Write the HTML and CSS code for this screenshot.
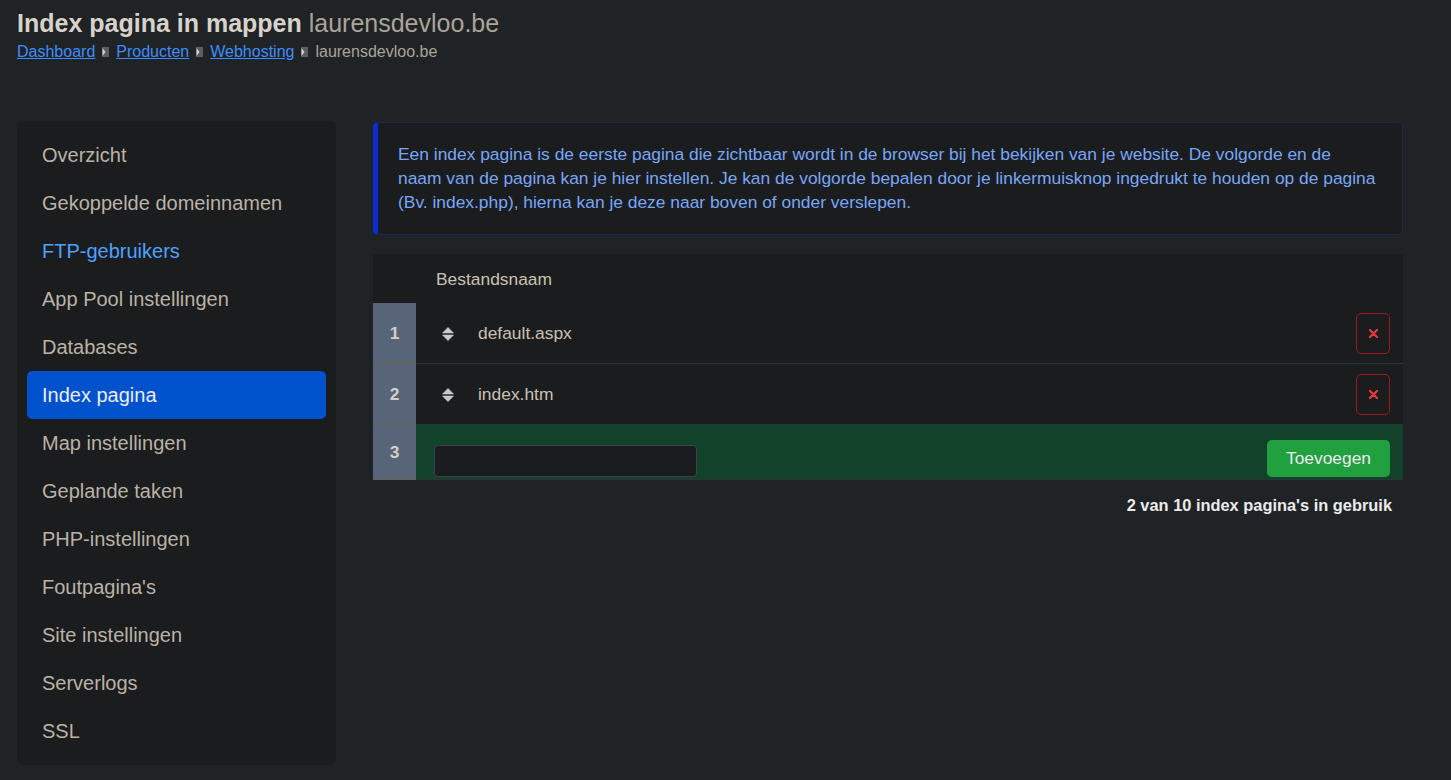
FILE: index.html
```html
<!DOCTYPE html>
<html lang="nl">
<head>
<meta charset="utf-8">
<title>Index pagina in mappen</title>
<link rel="stylesheet" href="styles.css">
</head>
<body>
<div class="page">
  <header class="page-head">
    <h1 class="title"><span class="title-main">Index pagina in mappen</span> <span class="title-sub">laurensdevloo.be</span></h1>
    <nav class="crumbs">
      <a href="#" class="crumb-link">Dashboard</a>
      <svg class="crumb-sep" width="7" height="10" viewBox="0 0 7 10"><rect x="0" y="0" width="7" height="10" fill="#5c5c5c"/><polygon points="0.5,1 3.5,5 0.5,9" fill="#d2d2d2"/></svg>
      <a href="#" class="crumb-link">Producten</a>
      <svg class="crumb-sep" width="7" height="10" viewBox="0 0 7 10"><rect x="0" y="0" width="7" height="10" fill="#5c5c5c"/><polygon points="0.5,1 3.5,5 0.5,9" fill="#d2d2d2"/></svg>
      <a href="#" class="crumb-link">Webhosting</a>
      <svg class="crumb-sep" width="7" height="10" viewBox="0 0 7 10"><rect x="0" y="0" width="7" height="10" fill="#5c5c5c"/><polygon points="0.5,1 3.5,5 0.5,9" fill="#d2d2d2"/></svg>
      <span class="crumb-current">laurensdevloo.be</span>
    </nav>
  </header>

  <div class="layout">
    <aside class="sidenav">
      <a href="#" class="nav-item">Overzicht</a>
      <a href="#" class="nav-item">Gekoppelde domeinnamen</a>
      <a href="#" class="nav-item nav-item--link">FTP-gebruikers</a>
      <a href="#" class="nav-item">App Pool instellingen</a>
      <a href="#" class="nav-item">Databases</a>
      <a href="#" class="nav-item nav-item--active">Index pagina</a>
      <a href="#" class="nav-item">Map instellingen</a>
      <a href="#" class="nav-item">Geplande taken</a>
      <a href="#" class="nav-item">PHP-instellingen</a>
      <a href="#" class="nav-item">Foutpagina's</a>
      <a href="#" class="nav-item">Site instellingen</a>
      <a href="#" class="nav-item">Serverlogs</a>
      <a href="#" class="nav-item">SSL</a>
    </aside>

    <main class="main">
      <div class="alert">Een index pagina is de eerste pagina die zichtbaar wordt in de browser bij het bekijken van je website. De volgorde en de<br>naam van de pagina kan je hier instellen. Je kan de volgorde bepalen door je linkermuisknop ingedrukt te houden op de pagina (Bv. index.php), hierna kan je deze naar boven of onder verslepen.</div>

      <div class="idx-table">
        <div class="idx-row idx-row--head">
          <div class="idx-num idx-num--head"></div>
          <div class="idx-cell idx-cell--head">Bestandsnaam</div>
        </div>
        <div class="idx-row">
          <div class="idx-num">1</div>
          <div class="idx-cell">
            <svg class="sort-icon" width="12" height="14" viewBox="0 0 12 14"><path d="M6 0.4 L11.5 6 H0.5 Z" fill="#cacaca" stroke="#cacaca" stroke-width="0.6" stroke-linejoin="round"/><path d="M0.5 8 H11.5 L6 13.6 Z" fill="#cacaca" stroke="#cacaca" stroke-width="0.6" stroke-linejoin="round"/></svg>
            <span class="file-name">default.aspx</span>
            <button class="btn-del" type="button"><svg width="9" height="9" viewBox="0 0 9 9"><path d="M1 1 L8 8 M8 1 L1 8" stroke="#e2393e" stroke-width="2.4" stroke-linecap="round"/></svg></button>
          </div>
        </div>
        <div class="idx-row">
          <div class="idx-num">2</div>
          <div class="idx-cell">
            <svg class="sort-icon" width="12" height="14" viewBox="0 0 12 14"><path d="M6 0.4 L11.5 6 H0.5 Z" fill="#cacaca" stroke="#cacaca" stroke-width="0.6" stroke-linejoin="round"/><path d="M0.5 8 H11.5 L6 13.6 Z" fill="#cacaca" stroke="#cacaca" stroke-width="0.6" stroke-linejoin="round"/></svg>
            <span class="file-name">index.htm</span>
            <button class="btn-del" type="button"><svg width="9" height="9" viewBox="0 0 9 9"><path d="M1 1 L8 8 M8 1 L1 8" stroke="#e2393e" stroke-width="2.4" stroke-linecap="round"/></svg></button>
          </div>
        </div>
        <div class="idx-row idx-row--new">
          <div class="idx-num">3</div>
          <div class="idx-cell idx-cell--new">
            <input class="new-input" type="text">
            <button class="btn-add" type="button">Toevoegen</button>
          </div>
        </div>
      </div>

      <p class="usage">2 van 10 index pagina's in gebruik</p>
    </main>
  </div>
</div>
</body>
</html>
```

FILE: styles.css
```css
* { box-sizing: border-box; }

html, body {
  margin: 0;
  padding: 0;
  background: #202325;
  font-family: "Liberation Sans", Arial, sans-serif;
  color: #bab2a6;
}

.page {
  padding: 8px 17px 15px 17px;
  min-height: 780px;
}

.title {
  margin: 0;
  font-size: 25px;
  line-height: 30px;
  font-weight: normal;
}
.title-main {
  font-weight: bold;
  color: #d7d3cb;
}
.title-sub {
  color: #aaa49b;
}

.crumbs {
  margin-top: 4px;
  display: flex;
  align-items: center;
  gap: 7px;
  font-size: 16px;
  line-height: 20px;
}
.crumb-link {
  color: #3c8dff;
  text-decoration: underline;
}
.crumb-sep { display: block; }
.crumb-current { color: #aaa49b; }

.layout {
  display: flex;
  align-items: flex-start;
  margin-top: 59px;
}

.sidenav {
  width: 319px;
  flex: none;
  background: #1b1c1e;
  border-radius: 6px;
  padding: 10px;
  display: flex;
  flex-direction: column;
}
.nav-item {
  display: block;
  padding: 12px 15px;
  font-size: 20px;
  line-height: 24px;
  color: #bab2a6;
  text-decoration: none;
  border-radius: 5px;
}
.nav-item--link { color: #4da2ff; }
.nav-item--active {
  background: #0052cc;
  color: #ececf2;
}

.main {
  margin-left: 37px;
  margin-top: 1px;
  width: 1030px;
  flex: none;
}

.alert {
  background: #1b1c1e;
  border: 1px solid #1d2753;
  border-left: 5px solid #0b2ad8;
  border-radius: 5px;
  padding: 19px 20px 20px 20px;
  font-size: 17.4px;
  line-height: 24px;
  color: #78a6f6;
}

.idx-table {
  margin-top: 19px;
}
.idx-row {
  display: flex;
  background: #1b1c1e;
  border-bottom: 1px solid #283443;
}
.idx-row--head {
  height: 49px;
  border-bottom: none;
}
.idx-num {
  width: 43px;
  flex: none;
  background: #586477;
  color: #d2cec8;
  font-weight: bold;
  font-size: 17.4px;
  display: flex;
  align-items: center;
  justify-content: center;
  border-bottom: 1px solid #6a604f;
  margin-bottom: -1px;
}
.idx-num--head {
  background: transparent;
  border-bottom: none;
  margin-bottom: 0;
}
.idx-cell {
  flex: 1;
  display: flex;
  align-items: center;
  padding: 10px 13px 9px 18px;
  font-size: 17.4px;
  color: #c9c1b5;
}
.idx-cell--head {
  padding: 2px 0 0 20px;
}
.sort-icon {
  display: block;
  margin-left: 8px;
  flex: none;
}
.file-name {
  margin-left: 24px;
}
.btn-del {
  margin-left: auto;
  width: 34px;
  height: 41px;
  background: transparent;
  border: 1px solid #9c1a1c;
  border-radius: 5px;
  display: flex;
  align-items: center;
  justify-content: center;
  padding: 0;
}
.btn-del svg { display: block; }

.idx-row--new {
  background: #12432a;
  border-bottom: 1px solid #2e3338;
}
.idx-cell--new {
  align-items: flex-end;
  padding: 15px 13px 2px 18px;
}
.new-input {
  width: 263px;
  height: 32px;
  background: #1b1c1f;
  border: 1px solid #3b4049;
  border-radius: 4px;
  color: #c9c1b5;
  font-family: inherit;
  font-size: 16px;
}
.btn-add {
  margin-left: auto;
  width: 123px;
  height: 37px;
  background: #21a040;
  border: none;
  border-radius: 5px;
  color: #ebebeb;
  font-family: inherit;
  font-size: 17.4px;
  padding: 0;
}

.usage {
  margin: 13px 11px 0 0;
  text-align: right;
  font-weight: bold;
  font-size: 16.4px;
  line-height: 24px;
  color: #ebebeb;
}
```
